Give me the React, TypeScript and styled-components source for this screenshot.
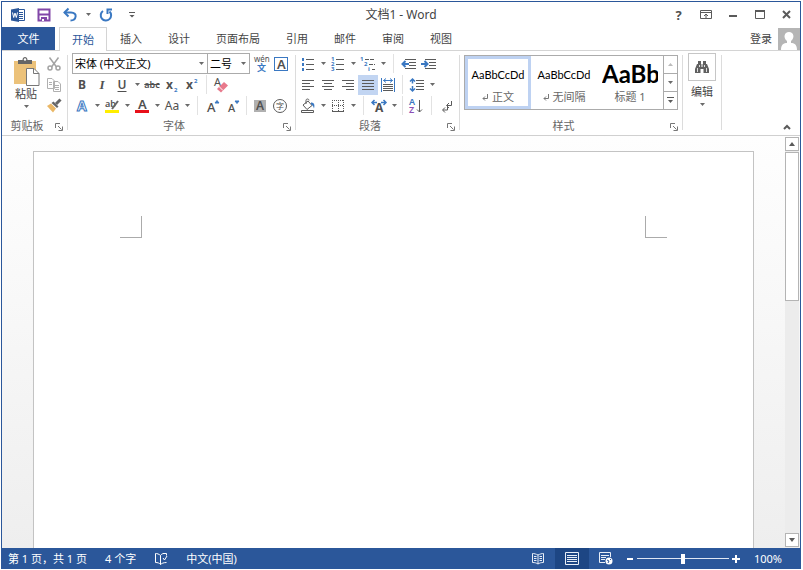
import React from "react";
import styled, { createGlobalStyle, css } from "styled-components";

const BLUE = "#2b579a";
const INK = "#5a5a5a";
const ACCENT = "#3a78c2";
const UI_FONT = `"Noto Sans", "Noto Sans CJK SC", sans-serif`;

const GlobalStyle = createGlobalStyle`
  * { box-sizing: border-box; }
  body { margin: 0; background: #fff; font: 11px/16px ${UI_FONT}; color: #444; }
  button, select, input { font: inherit; color: inherit; margin: 0; }
  svg { overflow: visible; }
`;

const Window = styled.div`
  display: flex;
  flex-direction: column;
  height: calc(100vh - 2px);
  margin: 1px 2px 1px 1px;
  border: 1px solid ${BLUE};
  border-bottom: 0;
  background: #fff;
  overflow: hidden;
`;

const PlainButton = styled.button`
  display: flex;
  align-items: center;
  justify-content: center;
  padding: 0;
  border: 0;
  background: none;
`;

const TitleBar = styled.header`
  display: grid;
  grid-template-columns: 1fr auto 1fr;
  align-items: center;
  height: 25px;
`;

const QuickAccess = styled.div`
  display: flex;
  align-items: center;
  padding-left: 3px;
`;

const QuickButton = styled(PlainButton)`
  width: 26px;
  height: 24px;
`;

const Title = styled.h1`
  margin: 0;
  font-size: 12px;
  font-weight: 400;
`;

const WindowControls = styled.div`
  display: flex;
  justify-content: flex-end;
`;

const WindowButton = styled(PlainButton)`
  width: 27px;
  height: 24px;
`;

const TabStrip = styled.nav`
  display: flex;
  align-items: flex-end;
  height: 24px;
  flex: none;
  border-bottom: 1px solid #d4d4d4;
`;

const FileTab = styled(PlainButton)`
  width: 53px;
  height: 23px;
  margin-right: 4px;
  background: ${BLUE};
  color: #fff;
`;

const Tab = styled(PlainButton)<{ $active?: boolean }>`
  height: 23px;
  padding: 0 13px;
  ${(p) =>
    p.$active &&
    css`
      height: 24px;
      margin-bottom: -1px;
      padding: 0 12px;
      border: 1px solid #d4d4d4;
      border-bottom: 0;
      background: #fff;
      color: ${BLUE};
    `}
`;

const Account = styled(PlainButton)`
  gap: 6px;
  height: 23px;
  margin-left: auto;
`;

const Ribbon = styled.div`
  display: flex;
  flex: none;
  border-bottom: 1px solid #d0d0d0;
`;

const Group = styled.section`
  display: flex;
  flex-direction: column;
  padding-top: 2px;
`;

const GroupBody = styled.div<{ $left?: number; $right?: number }>`
  display: flex;
  height: 63px;
  padding: 0 ${(p) => p.$right ?? 4}px 0 ${(p) => p.$left ?? 4}px;
`;

const GroupFooter = styled.div`
  display: flex;
  align-items: center;
  height: 19px;
  padding-right: 1px;
  color: #666;
`;

const GroupLabel = styled.span`
  flex: 1;
  text-align: center;
`;

const Launcher = styled(PlainButton)`
  width: 14px;
  height: 14px;
  margin-top: 2px;
`;

const GroupDivider = styled.div`
  width: 1px;
  margin: 4px 0 5px;
  background: #dcdcdc;
`;

const Rows = styled.div`
  display: flex;
  flex-direction: column;
`;

const Row = styled.div`
  display: flex;
  align-items: center;
  height: 21px;
`;

const Tool = styled(PlainButton)<{ $on?: boolean }>`
  width: 20px;
  height: 20px;
  background: ${(p) => (p.$on ? "#c2d5f2" : "none")};
`;

const ArrowButton = styled(PlainButton)`
  width: 10px;
  height: 20px;
`;

const Divider = styled.span<{ $gap: number }>`
  width: 1px;
  height: 19px;
  margin: 0 ${(p) => p.$gap}px;
  background: #e2e2e2;
`;

const PasteButton = styled(PlainButton)`
  flex-direction: column;
  justify-content: flex-start;
  width: 30px;
  color: #444;
  padding-top: 3px;
`;

const PasteLabel = styled.span`
  margin-top: -1px;
  padding-top: 1px;
`;

const PasteArrow = styled.span`
  display: flex;
  align-items: center;
  height: 8px;
`;

const ToolColumn = styled.div`
  display: flex;
  flex-direction: column;
  margin-left: 3px;
`;

const ComboBox = styled.span<{ $width: number }>`
  display: flex;
  align-items: center;
  width: ${(p) => p.$width}px;
  height: 21px;
  border: 1px solid #ababab;
  & + & {
    border-left: 0;
    margin-right: 1px;
  }
`;

const ComboSelect = styled.select`
  flex: 1;
  min-width: 0;
  height: 19px;
  padding: 0 2px;
  border: 0;
  background: none;
  appearance: none;
  color: #000;
`;

const ComboArrow = styled.span`
  display: flex;
  width: 12px;
  justify-content: center;
  pointer-events: none;
`;

const Gallery = styled.div`
  display: flex;
  height: 55px;
  margin-top: 2px;
  border: 1px solid #ababab;
`;

const StyleCard = styled.button<{ $on?: boolean }>`
  display: flex;
  flex-direction: column;
  align-items: center;
  width: 66px;
  padding: 0;
  border: 3px solid ${(p) => (p.$on ? "#bed2f2" : "transparent")};
  background: none;
  color: #666;
`;

const Sample = styled.span<{ $heading?: boolean }>`
  width: ${(p) => (p.$heading ? 56 : 58)}px;
  height: 30px;
  overflow: hidden;
  white-space: nowrap;
  text-align: ${(p) => (p.$heading ? "left" : "center")};
  color: #000;
  font: ${(p) => (p.$heading ? "bold 24px/30px" : "11px/32px")} Lato, sans-serif;
`;

const StyleName = styled.span`
  display: flex;
  align-items: center;
  gap: 3px;
  line-height: 16px;
`;

const GalleryButtons = styled.div`
  display: flex;
  flex-direction: column;
  width: 14px;
  border-left: 1px solid #ababab;
`;

const GalleryButton = styled(PlainButton)`
  flex: 1;
  & + & {
    border-top: 1px solid #ababab;
  }
`;

const EditButton = styled(PlainButton)`
  flex-direction: column;
  justify-content: flex-start;
  width: 30px;
  gap: 3px;
`;

const FindFrame = styled.span`
  display: flex;
  align-items: center;
  justify-content: center;
  width: 28px;
  height: 28px;
  border: 1px solid #c6c6c6;
`;

const Collapse = styled(PlainButton)`
  width: 26px;
  height: 16px;
  margin-left: auto;
  align-self: flex-end;
`;

const Workspace = styled.main`
  display: flex;
  flex: 1;
  min-height: 0;
  background: linear-gradient(#fefefe, #f8f8f8 40%, #eeeeee);
`;

const Canvas = styled.div`
  display: flex;
  flex: 1;
  padding: 15px 31px 0;
`;

const Page = styled.article`
  display: flex;
  flex: 1;
  justify-content: space-between;
  padding: 64px 86px 0;
  border: 1px solid #c3c3c3;
  border-bottom: 0;
  background: #fff;
`;

const CropMark = styled.span<{ $side: "left" | "right" }>`
  width: 22px;
  height: 22px;
  border-bottom: 1px solid #ababab;
  ${(p) => (p.$side === "left" ? "border-right" : "border-left")}: 1px solid #ababab;
`;

const ScrollBar = styled.div`
  display: flex;
  flex-direction: column;
  width: 14px;
  margin: 1px 1px 1px 0;
  background: #ececec;
`;

const ScrollButton = styled(PlainButton)`
  height: 14px;
  flex: none;
  border: 1px solid #b4b4b4;
  background: #fff;
`;

const ScrollTrack = styled.div`
  flex: 1;
  padding-top: 1px;
`;

const ScrollThumb = styled.div`
  height: 39%;
  border: 1px solid #b4b4b4;
  background: #fff;
`;

const StatusBar = styled.footer`
  display: flex;
  align-items: center;
  flex: none;
  height: 21px;
  padding: 0 18px 0 6px;
  background: ${BLUE};
  color: #fff;
`;

const StatusItems = styled.div`
  display: flex;
  align-items: center;
  gap: 18px;
  flex: 1;
`;

const ViewButton = styled(PlainButton)<{ $on?: boolean }>`
  width: 34px;
  height: 21px;
  background: ${(p) => (p.$on ? "#1d4684" : "none")};
`;

const ZoomButton = styled(PlainButton)`
  width: 14px;
  height: 21px;
`;

const ZoomSlider = styled.input`
  width: 92px;
  height: 20px;
  appearance: none;
  background: linear-gradient(#dfe7f3, #dfe7f3) center / 100% 1px no-repeat;
  &::-webkit-slider-thumb {
    appearance: none;
    width: 4px;
    height: 10px;
    background: #fff;
  }
`;

const ZoomLevel = styled(PlainButton)`
  margin-left: 11px;
`;

const Glyph = styled.span<{ $size?: number }>`
  font: ${(p) => p.$size ?? 12}px/16px ${UI_FONT};
  color: #505050;
`;
const BoldGlyph = styled(Glyph)`
  font-weight: 700;
`;
const ItalicGlyph = styled(Glyph)`
  font-family: "Liberation Serif", serif;
  font-style: italic;
  font-weight: 700;
`;
const UnderlineGlyph = styled(BoldGlyph)`
  font-weight: 600;
  text-decoration: underline;
  text-underline-offset: 2px;
`;
const StrikeGlyph = styled(Glyph)`
  font-weight: 600;
  text-decoration: line-through;
`;

type IconProps = { w?: number; h?: number; children: React.ReactNode };
const Icon = ({ w = 16, h = 16, children }: IconProps) => (
  <svg width={w} height={h} viewBox={`0 0 ${w} ${h}`} fill="none" stroke={INK} aria-hidden="true">
    {children}
  </svg>
);

const Down = ({ color = "#6a6a6a" }: { color?: string }) => (
  <Icon w={5} h={3}><path d="M0 0h5L2.500 3z" fill={color} stroke="none" /></Icon>
);

type LetterProps = { x: number; y: number; size: number; color?: string; weight?: number; children: string };
const Letter = ({ x, y, size, color = "#505050", weight = 400, children }: LetterProps) => (
  <text x={x} y={y} fontSize={size} fill={color} stroke="none" fontWeight={weight} fontFamily={`"Noto Sans", "Noto Sans CJK SC", sans-serif`}>
    {children}
  </text>
);

const Drop = ({ label }: { label: string }) => (
  <ArrowButton aria-label={label}><Down /></ArrowButton>
);

const WordLogo = () => (
  <Icon>
    <path d="M8 2.500h6.500v11H8" stroke={BLUE} fill="#fff" />
    <path d="M9 5.500h4M9 7.500h4M9 9.500h4M9 11.500h4" stroke={BLUE} />
    <path d="M1 2.500 9 1v14l-8-1.500z" fill={BLUE} stroke="none" />
    <path d="m2.500 5.500 1.200 5L5 6l1.300 4.500 1.200-5" stroke="#fff" />
  </Icon>
);
const SaveIcon = () => (
  <Icon w={14} h={14}>
    <path d="M1.500 1.500h11v11h-11z" stroke="#8147a8" strokeWidth="2" fill="#fff" />
    <path d="M1.500 6.500h11" stroke="#8147a8" strokeWidth="2" />
    <path d="M4 9h6v4H4z" fill="#8147a8" stroke="none" />
    <path d="M5 11h2v2H5z" fill="#fff" stroke="none" />
  </Icon>
);
const UndoIcon = () => (
  <Icon>
    <path d="M2.500 5.500H9c7 0 5.500 8-.5 8" stroke={ACCENT} strokeWidth="2" />
    <path d="M6.500 1.500 2.500 5.500l4 4" stroke={ACCENT} strokeWidth="2" />
  </Icon>
);
const RedoIcon = () => (
  <Icon>
    <path d="M5 4a5.200 5.200 0 1 0 6.500.5" stroke={ACCENT} strokeWidth="2" />
    <path d="M9.500 7V2.500H14" stroke={ACCENT} strokeWidth="2" />
  </Icon>
);
const Clipboard = () => (
  <Icon w={28} h={30}>
    <path d="M2 5h22v23H2z" fill="#ecc27a" stroke="none" />
    <path d="M6 8V4h4.500c0-4 5-4 5 0H20v4z" fill="#666" stroke="none" />
    <circle cx="13" cy="3.500" r="1.200" fill="#fff" stroke="none" />
    <path d="M14.500 12.500H22l5 5v12H14.500z" fill="#fff" stroke="#777" />
    <path d="M21.500 12.500v5H27" stroke="#777" />
  </Icon>
);
const ScissorsIcon = () => (
  <Icon>
    <g stroke="#a3a3a3" strokeWidth="1.500">
      <path d="M3.500 1.500 10.500 11M12.500 1.500 5.500 11" />
      <circle cx="4" cy="12" r="2" /><circle cx="12" cy="12" r="2" />
    </g>
  </Icon>
);
const CopyIcon = () => (
  <Icon>
    <g stroke="#b0b0b0" fill="#fff">
      <path d="M1.500 1.500H6l2.500 2.500v7.500h-7zM7.500 4.500H12l2.500 2.500v7.500h-7z" />
      <path d="M3 5.500h3M3 7.500h3M9 8.500h4M9 10.500h4M9 12.500h4" />
    </g>
  </Icon>
);
const BrushIcon = () => (
  <Icon>
    <path d="m1 8 4-2.500 5 5L7 14.500z" fill="#eab765" stroke="none" />
    <path d="m5.500 5 2-1.500 5 5L11 10z" fill="#666" stroke="none" />
    <path d="m10 6 4.500-4.500" stroke="#666" strokeWidth="3" />
  </Icon>
);
const LauncherIcon = () => (
  <Icon w={8} h={8}>
    <path d="M.5 5V.5H5M3 3l3.500 3.500M7.500 3.500v4h-4" stroke="#777" />
  </Icon>
);
const PhoneticIcon = () => (
  <Icon w={18} h={18}>
    <Letter x={2} y={7} size={8}>wén</Letter>
    <Letter x={5} y={16} size={9} color={ACCENT} weight={700}>文</Letter>
  </Icon>
);
const BorderedA = () => (
  <Icon><rect x="1.500" y="1.500" width="13" height="13" stroke={ACCENT} /><Letter x={4} y={13} size={13} weight={600}>A</Letter></Icon>
);
const ScriptX = ({ sup }: { sup?: boolean }) => (
  <Icon><Letter x={2} y={12} size={12} weight={700}>x</Letter><Letter x={10} y={sup ? 6 : 15} size={6} color={ACCENT} weight={700}>2</Letter></Icon>
);
const EraserIcon = () => (
  <Icon>
    <Letter x={1} y={9} size={11}>A</Letter>
    <path d="M4 12 11 5l4 3.500-7 7z" fill="#e8798c" stroke="none" />
    <path d="m6 9.500 4 4" stroke="#fff" />
  </Icon>
);
const OutlineA = () => (
  <Icon>
    <text x="3" y="13" fontSize="14" fontWeight="700" fill="#fff" stroke={ACCENT} strokeWidth="1" fontFamily={`"Noto Sans", sans-serif`}>A</text>
  </Icon>
);
const HighlightIcon = () => (
  <Icon>
    <Letter x={1} y={9} size={9} weight={600}>ab</Letter>
    <path d="m8 11 6-8" stroke="#666" strokeWidth="2" />
    <path d="M1 12h14v3H1z" fill="#ffee00" stroke="none" />
  </Icon>
);
const FontColorIcon = () => (
  <Icon><Letter x={4} y={11} size={13} weight={600}>A</Letter><path d="M1 12h14v3H1z" fill="#e8101a" stroke="none" /></Icon>
);
const ResizeA = ({ grow }: { grow?: boolean }) => (
  <Icon>
    <Letter x={grow ? 2 : 3} y={14} size={grow ? 13 : 11} weight={500}>A</Letter>
    <path d={grow ? "M10 5h4l-2-2.500z" : "M10 3h4l-2 2.500z"} fill={ACCENT} stroke={ACCENT} />
  </Icon>
);
const ShadedA = () => (
  <Icon><path d="M2 2h12v12H2z" fill="#b0b0b0" stroke="none" /><Letter x={4} y={12} size={12} weight={600}>A</Letter></Icon>
);
const CircledChar = () => (
  <Icon><circle cx="8" cy="8" r="6.500" /><Letter x={4} y={11} size={8}>字</Letter></Icon>
);
const BulletsIcon = () => (
  <Icon>
    <path d="M6 3.500h8M6 8.500h8M6 13.500h8" />
    <path d="M2 2h2v3H2zM2 7h2v3H2zM2 12h2v3H2z" fill={ACCENT} stroke="none" />
  </Icon>
);
const NumberingIcon = () => (
  <Icon>
    <path d="M6 3.500h8M6 8.500h8M6 13.500h8" />
    <Letter x={1} y={5} size={6} color={ACCENT} weight={700}>1</Letter>
    <Letter x={1} y={10} size={6} color={ACCENT} weight={700}>2</Letter>
    <Letter x={1} y={15} size={6} color={ACCENT} weight={700}>3</Letter>
  </Icon>
);
const MultilevelIcon = () => (
  <Icon>
    <path d="M5 3.500h9M9 8.500h6M12 13.500h3" strokeDasharray="4 1" />
    <Letter x={0} y={5} size={6} color={ACCENT} weight={700}>1</Letter>
    <Letter x={4} y={10} size={6} color={ACCENT} weight={700}>2</Letter>
    <Letter x={8} y={15} size={6} color={ACCENT} weight={700}>i</Letter>
  </Icon>
);
const IndentIcon = ({ out }: { out?: boolean }) => (
  <Icon>
    <path d="M4 3.500h11M8 6.500h7M8 9.500h7M4 12.500h11" />
    <path d={out ? "M8 8H2M4.500 5 1.500 8l3 3" : "M0 8h6M3.500 5l3 3-3 3"} stroke={ACCENT} strokeWidth="2" />
  </Icon>
);
const AlignIcon = ({ d }: { d: string }) => <Icon><path d={d} /></Icon>;
const DistributeIcon = () => (
  <Icon>
    <path d="M1.500 1v14M14.500 1v14M3.500 3.500h9M6 1.500l-2.500 2L6 5.500M10 1.500l2.500 2-2.500 2" stroke={ACCENT} />
    <path d="M3 7.500h10M3 9.500h10M3 11.500h10M3 13.500h10" />
  </Icon>
);
const LineSpacingIcon = () => (
  <Icon>
    <path d="M7 3.500h8M7 6.500h8M7 9.500h8M7 12.500h8" />
    <path d="M3.500 2v4.500M3.500 9v5M1 4.500 3.500 2 6 4.500M1 11.500 3.500 14 6 11.500" stroke={ACCENT} strokeWidth="1.500" />
  </Icon>
);
const BucketIcon = () => (
  <Icon>
    <path d="m3 7 5-4 4 4.500-5 4z" /><path d="M6 6V2.500c0-2 3-2 3 0" />
    <path d="M11 4.500c3 0 4 2 3 6-1-3-2-4-3-4z" fill={ACCENT} stroke="none" />
    <path d="M1.500 12.500h12v2h-12z" />
  </Icon>
);
const BordersIcon = () => (
  <Icon><path d="M2.500 2v11M8.500 2v11M13.500 2v11M2 2.500h12M2 7.500h12" strokeDasharray="1 1" /><path d="M2 13.500h12" /></Icon>
);
const ScaleIcon = () => (
  <Icon>
    <Letter x={4} y={14} size={12} weight={700}>A</Letter>
    <path d="M6 4.500H1.500M3.500 2 1 4.500 3.500 7M10 4.500h4.500M12.500 2 15 4.500 12.500 7" stroke={ACCENT} strokeWidth="1.500" />
  </Icon>
);
const SortIcon = () => (
  <Icon>
    <Letter x={1} y={7} size={9} color={ACCENT} weight={600}>A</Letter>
    <Letter x={1} y={15} size={9} color="#8b4fb5" weight={600}>Z</Letter>
    <path d="M11.500 2v12M9 11.500l2.500 2.500 2.500-2.500" />
  </Icon>
);
const MarksIcon = () => (
  <Icon>
    <path d="M12.500 3v4.500H8M10 5 7.500 7.500 10 10M8.500 8.500V12H4M6 9.500 3.500 12 6 14.500" />
  </Icon>
);
const ReturnMark = () => (
  <Icon w={7} h={7}><path d="M5.500 0v4.500H1M3 2.500l-2 2 2 2" stroke="#777" /></Icon>
);
const Binoculars = () => (
  <Icon>
    <g fill="#606060" stroke="none">
      <path d="M4 2h3v3H4zM9 2h3v3H9zM3 5h4.500v3h1V5H13l2 5v4H9.500v-4h-3v4H1v-4z" />
    </g>
    <path d="M3.500 9v4M5.500 6v2M10.500 6v2M12.500 9v4" stroke="#ddd" />
  </Icon>
);
const AvatarIcon = () => (
  <Icon w={22} h={22}>
    <path d="M0 0h22v22H0z" fill="#b5b5b5" stroke="none" />
    <path d="M3 22c0-6 3-7 6-7v-2c-4-3-3-9 2-9s6 6 2 9v2c3 0 6 1 6 7z" fill="#fff" stroke="none" />
  </Icon>
);
const ProofIcon = () => (
  <Icon w={14} h={14}>
    <path d="M6.500 3.500C5 2 3 1.500 1.500 1.500v9c2 0 4 .5 5 2zm0 0c1-1.500 2-2 4-2M6.500 12.500c1-1 3-2 6-2M9 6l1.500 2L13 4M9 1.500h3.500v2" stroke="#fff" />
  </Icon>
);
const ReadIcon = () => (
  <Icon w={14} h={12}>
    <path d="M7 2C5 1 3 .5 1.500.5v9C4 9.500 5.500 10 7 11c1.500-1 3-1.500 5.500-1.500v-9C11 .5 9 1 7 2zM7 2v9M3 3.500h2.500M3 5.500h2.500M3 7.500h2.500M8.500 3.500H11M8.500 5.500H11M8.500 7.500H11" stroke="#e8eef7" />
  </Icon>
);
const PrintIcon = () => (
  <Icon w={14} h={13}><path d="M.5.5h13v12H.5zM2 3.500h10M2 5.500h10M2 7.500h10M2 9.500h10" stroke="#e8eef7" /></Icon>
);
const WebIcon = () => (
  <Icon w={14} h={13}>
    <path d="M11.500 5V.5H.5v10H6M2 3.500h8M2 5.500h5M2 7.500h4" stroke="#e8eef7" />
    <circle cx="10" cy="9" r="3.500" fill="#fff" stroke="none" />
    <path d="m8 8 2 1-1 2M11 7l1 1" stroke={BLUE} />
  </Icon>
);

const ALIGN = {
  left: "M2 3.500h12M2 6.500h8M2 9.500h12M2 12.500h8",
  center: "M2 3.500h12M4 6.500h8M2 9.500h12M4 12.500h8",
  right: "M2 3.500h12M6 6.500h8M2 9.500h12M6 12.500h8",
  both: "M2 3.500h12M2 6.500h12M2 9.500h12M2 12.500h12",
};

const tabs = ["开始", "插入", "设计", "页面布局", "引用", "邮件", "审阅", "视图"];

const Footer = ({ label }: { label: string }) => (
  <GroupFooter>
    <GroupLabel>{label}</GroupLabel>
    <Launcher aria-label={`${label}设置`}><LauncherIcon /></Launcher>
  </GroupFooter>
);

const Combo = ({ label, value, width }: { label: string; value: string; width: number }) => (
  <ComboBox $width={width}>
    <ComboSelect aria-label={label} defaultValue={value}><option>{value}</option></ComboSelect>
    <ComboArrow><Down /></ComboArrow>
  </ComboBox>
);

const ClipboardGroup = () => (
  <Group>
    <GroupBody $left={9} $right={3}>
      <PasteButton>
        <Clipboard />
        <PasteLabel>粘贴</PasteLabel>
        <PasteArrow><Down /></PasteArrow>
      </PasteButton>
      <ToolColumn>
        <Row><Tool aria-label="剪切"><ScissorsIcon /></Tool></Row>
        <Row><Tool aria-label="复制"><CopyIcon /></Tool></Row>
        <Row><Tool aria-label="格式刷"><BrushIcon /></Tool></Row>
      </ToolColumn>
    </GroupBody>
    <Footer label="剪贴板" />
  </Group>
);

const FontGroup = () => (
  <Group>
    <GroupBody>
      <Rows>
        <Row>
          <Combo label="字体" value="宋体 (中文正文)" width={136} />
          <Combo label="字号" value="二号" width={42} />
          <Tool aria-label="拼音指南"><PhoneticIcon /></Tool>
          <Tool aria-label="字符边框"><BorderedA /></Tool>
        </Row>
        <Row>
          <Tool aria-label="加粗"><BoldGlyph>B</BoldGlyph></Tool>
          <Tool aria-label="倾斜"><ItalicGlyph $size={13}>I</ItalicGlyph></Tool>
          <Tool aria-label="下划线"><UnderlineGlyph>U</UnderlineGlyph></Tool>
          <Drop label="下划线选项" />
          <Tool aria-label="删除线"><StrikeGlyph $size={9}>abc</StrikeGlyph></Tool>
          <Tool aria-label="下标"><ScriptX /></Tool>
          <Tool aria-label="上标"><ScriptX sup /></Tool>
          <Divider $gap={4} />
          <Tool aria-label="清除格式"><EraserIcon /></Tool>
        </Row>
        <Row>
          <Tool aria-label="文本效果"><OutlineA /></Tool><Drop label="文本效果选项" />
          <Tool aria-label="突出显示"><HighlightIcon /></Tool><Drop label="突出显示颜色" />
          <Tool aria-label="字体颜色"><FontColorIcon /></Tool><Drop label="字体颜色选项" />
          <Tool aria-label="更改大小写"><Glyph>Aa</Glyph></Tool><Drop label="大小写选项" />
          <Divider $gap={5} />
          <Tool aria-label="增大字号"><ResizeA grow /></Tool>
          <Tool aria-label="减小字号"><ResizeA /></Tool>
          <Divider $gap={3} />
          <Tool aria-label="字符底纹"><ShadedA /></Tool>
          <Tool aria-label="带圈字符"><CircledChar /></Tool>
        </Row>
      </Rows>
    </GroupBody>
    <Footer label="字体" />
  </Group>
);

const ParagraphGroup = () => (
  <Group>
    <GroupBody $left={2} $right={2}>
      <Rows>
        <Row>
          <Tool aria-label="项目符号"><BulletsIcon /></Tool><Drop label="项目符号选项" />
          <Tool aria-label="编号"><NumberingIcon /></Tool><Drop label="编号选项" />
          <Tool aria-label="多级列表"><MultilevelIcon /></Tool><Drop label="多级列表选项" />
          <Divider $gap={5} />
          <Tool aria-label="减少缩进量"><IndentIcon out /></Tool>
          <Tool aria-label="增加缩进量"><IndentIcon /></Tool>
        </Row>
        <Row>
          <Tool aria-label="左对齐"><AlignIcon d={ALIGN.left} /></Tool>
          <Tool aria-label="居中"><AlignIcon d={ALIGN.center} /></Tool>
          <Tool aria-label="右对齐"><AlignIcon d={ALIGN.right} /></Tool>
          <Tool aria-label="两端对齐" $on><AlignIcon d={ALIGN.both} /></Tool>
          <Tool aria-label="分散对齐"><DistributeIcon /></Tool>
          <Divider $gap={4} />
          <Tool aria-label="行距"><LineSpacingIcon /></Tool><Drop label="行距选项" />
        </Row>
        <Row>
          <Tool aria-label="底纹"><BucketIcon /></Tool><Drop label="底纹选项" />
          <Tool aria-label="边框"><BordersIcon /></Tool><Drop label="边框选项" />
          <Divider $gap={5} />
          <Tool aria-label="中文版式"><ScaleIcon /></Tool><Drop label="中文版式选项" />
          <Divider $gap={3} />
          <Tool aria-label="排序"><SortIcon /></Tool>
          <Divider $gap={5} />
          <Tool aria-label="编辑标记"><MarksIcon /></Tool>
        </Row>
      </Rows>
    </GroupBody>
    <Footer label="段落" />
  </Group>
);

const StylesGroup = () => (
  <Group>
    <GroupBody>
      <Gallery>
        <StyleCard $on><Sample>AaBbCcDd</Sample><StyleName><ReturnMark />正文</StyleName></StyleCard>
        <StyleCard><Sample>AaBbCcDd</Sample><StyleName><ReturnMark />无间隔</StyleName></StyleCard>
        <StyleCard><Sample $heading>AaBb</Sample><StyleName>标题 1</StyleName></StyleCard>
        <GalleryButtons>
          <GalleryButton aria-label="上一行"><Icon w={5} h={3}><path d="M0 3h5L2.500 0z" fill="#bbb" stroke="none" /></Icon></GalleryButton>
          <GalleryButton aria-label="下一行"><Down /></GalleryButton>
          <GalleryButton aria-label="其他样式"><Icon w={7} h={7}><path d="M0 .5h7" /><path d="M1 3h5L3.500 6z" fill={INK} stroke="none" /></Icon></GalleryButton>
        </GalleryButtons>
      </Gallery>
    </GroupBody>
    <Footer label="样式" />
  </Group>
);

export default function App() {
  return (
    <>
      <GlobalStyle />
      <Window>
        <TitleBar>
          <QuickAccess>
            <QuickButton aria-label="Word"><WordLogo /></QuickButton>
            <QuickButton aria-label="保存"><SaveIcon /></QuickButton>
            <QuickButton aria-label="撤消"><UndoIcon /></QuickButton>
            <Drop label="撤消列表" />
            <QuickButton aria-label="恢复"><RedoIcon /></QuickButton>
            <QuickButton aria-label="自定义快速访问工具栏">
              <Icon w={6} h={6}><path d="M0 .5h6" /><path d="M.5 3h5L3 5.500z" fill={INK} stroke="none" /></Icon>
            </QuickButton>
          </QuickAccess>
          <Title>文档1 - Word</Title>
          <WindowControls>
            <WindowButton aria-label="帮助"><BoldGlyph $size={13}>?</BoldGlyph></WindowButton>
            <WindowButton aria-label="功能区显示选项">
              <Icon w={12} h={10}><path d="M.5.500h11v8H.5zM1 2.500h10M6 8V4M4 6l2-2 2 2" /></Icon>
            </WindowButton>
            <WindowButton aria-label="最小化"><Icon w={8} h={8}><path d="M0 5h8" strokeWidth="2" /></Icon></WindowButton>
            <WindowButton aria-label="最大化"><Icon w={10} h={9}><path d="M.5.500h9v8h-9z" /><path d="M0 1h10" strokeWidth="2" /></Icon></WindowButton>
            <WindowButton aria-label="关闭"><Icon w={9} h={9}><path d="m1 1 7 7M8 1 1 8" strokeWidth="2" /></Icon></WindowButton>
          </WindowControls>
        </TitleBar>
        <TabStrip>
          <FileTab>文件</FileTab>
          {tabs.map((name, i) => <Tab key={name} $active={i === 0}>{name}</Tab>)}
          <Account>登录<AvatarIcon /></Account>
        </TabStrip>
        <Ribbon>
          <ClipboardGroup />
          <GroupDivider />
          <FontGroup />
          <GroupDivider />
          <ParagraphGroup />
          <GroupDivider />
          <StylesGroup />
          <GroupDivider />
          <Group>
            <GroupBody>
              <EditButton>
                <FindFrame><Binoculars /></FindFrame>
                编辑
                <Down />
              </EditButton>
            </GroupBody>
          </Group>
          <GroupDivider />
          <Collapse aria-label="折叠功能区"><Icon w={8} h={6}><path d="m1 5 3-3 3 3" strokeWidth="2" /></Icon></Collapse>
        </Ribbon>
        <Workspace>
          <Canvas>
            <Page>
              <CropMark $side="left" />
              <CropMark $side="right" />
            </Page>
          </Canvas>
          <ScrollBar>
            <ScrollButton aria-label="向上滚动"><Icon w={6} h={4}><path d="M0 4h6L3 0z" fill={INK} stroke="none" /></Icon></ScrollButton>
            <ScrollTrack><ScrollThumb /></ScrollTrack>
            <ScrollButton aria-label="向下滚动"><Icon w={6} h={4}><path d="M0 0h6L3 4z" fill={INK} stroke="none" /></Icon></ScrollButton>
          </ScrollBar>
        </Workspace>
        <StatusBar>
          <StatusItems>
            <span>第 1 页，共 1 页</span>
            <span>4 个字</span>
            <ProofIcon />
            <span>中文(中国)</span>
          </StatusItems>
          <ViewButton aria-label="阅读视图"><ReadIcon /></ViewButton>
          <ViewButton aria-label="页面视图" $on><PrintIcon /></ViewButton>
          <ViewButton aria-label="Web 版式视图"><WebIcon /></ViewButton>
          <ZoomButton aria-label="缩小"><Icon w={6} h={6}><path d="M0 3h6" stroke="#fff" strokeWidth="2" /></Icon></ZoomButton>
          <ZoomSlider type="range" aria-label="显示比例" defaultValue={50} />
          <ZoomButton aria-label="放大"><Icon w={8} h={8}><path d="M0 4h8M4 0v8" stroke="#fff" strokeWidth="2" /></Icon></ZoomButton>
          <ZoomLevel>100%</ZoomLevel>
        </StatusBar>
      </Window>
    </>
  );
}
